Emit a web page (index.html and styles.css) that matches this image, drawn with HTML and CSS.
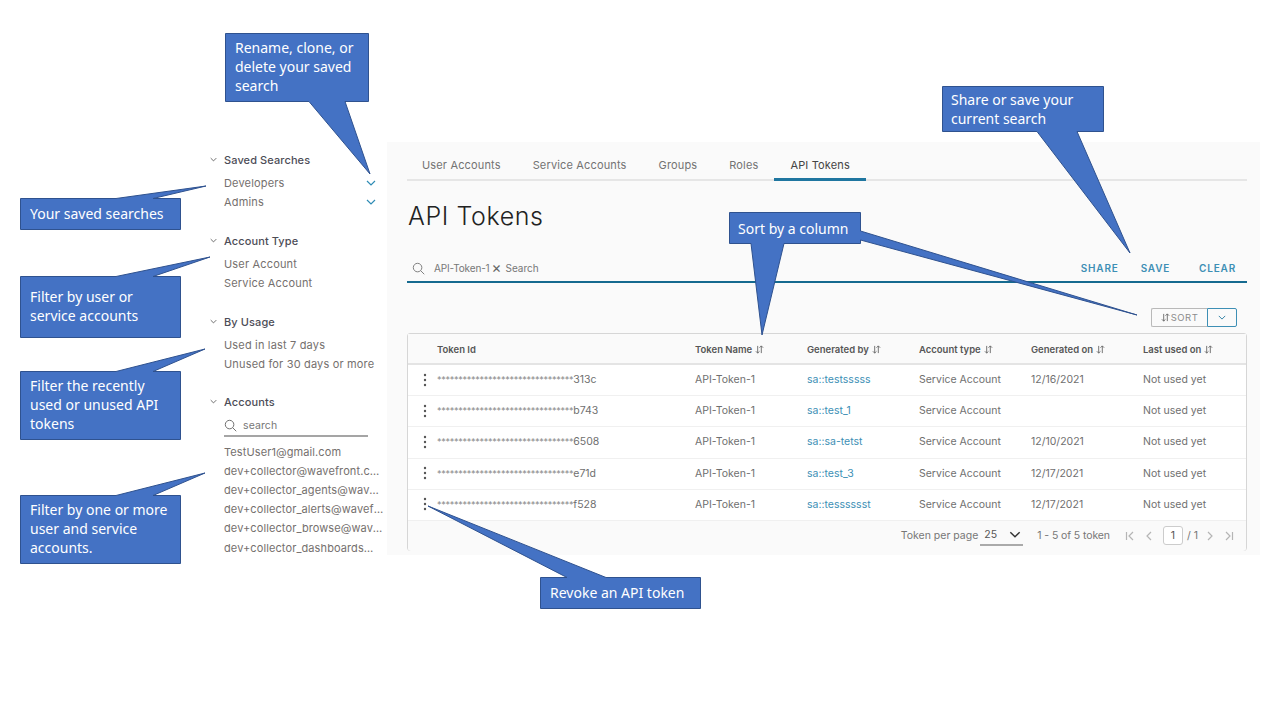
FILE: index.html
```html
<!DOCTYPE html>
<html>
<head>
    <meta charset="UTF-8">
    <title>API Tokens</title>
    <link rel="stylesheet" href="styles.css">
</head>
<body>
<svg class="defs">
    <symbol id="chev" viewBox="0 0 10 6"><path d="M1 1l4 4 4-4" fill="none" stroke="currentColor" stroke-width="1.2"/></symbol>
    <symbol id="sort" viewBox="0 0 10 10"><path d="M3 1v8M1 7l2 2 2-2M7 9V1M5 3l2-2 2 2" fill="none" stroke="currentColor" stroke-width="1"/></symbol>
    <symbol id="lens" viewBox="0 0 14 14"><circle cx="6" cy="6" r="4.6" fill="none" stroke="currentColor"/><path d="M9.4 9.4l3.8 3.8" stroke="currentColor"/></symbol>
    <symbol id="dots" viewBox="0 0 4 14"><circle cx="2" cy="2" r="1.2"/><circle cx="2" cy="7" r="1.2"/><circle cx="2" cy="12" r="1.2"/></symbol>
</svg>
<div class="stage">
    <div class="app">
        <aside class="side">
            <section class="group">
                <h4><svg class="caret"><use href="#chev"/></svg>Saved Searches</h4>
                <div class="item">Developers<svg class="more"><use href="#chev"/></svg></div>
                <div class="item">Admins<svg class="more"><use href="#chev"/></svg></div>
            </section>
            <section class="group">
                <h4><svg class="caret"><use href="#chev"/></svg>Account Type</h4>
                <div class="item">User Account</div>
                <div class="item">Service Account</div>
            </section>
            <section class="group">
                <h4><svg class="caret"><use href="#chev"/></svg>By Usage</h4>
                <div class="item">Used in last 7 days</div>
                <div class="item">Unused for 30 days or more</div>
            </section>
            <section class="group accounts">
                <h4><svg class="caret"><use href="#chev"/></svg>Accounts</h4>
                <div class="acct-search"><svg class="lens"><use href="#lens"/></svg>search</div>
                <div class="item">TestUser1@gmail.com</div>
                <div class="item"><span class="clip c1">dev+collector@wavefront.com</span></div>
                <div class="item"><span class="clip c1">dev+collector_agents@wavefront.com</span></div>
                <div class="item"><span class="clip c2">dev+collector_alerts@wavefront.com</span></div>
                <div class="item"><span class="clip c2">dev+collector_browse@wavefront.com</span></div>
                <div class="item"><span class="clip c3">dev+collector_dashboards@wavefront.com</span></div>
            </section>
        </aside>
        <main class="main">
            <nav class="tabs">
                <a>User Accounts</a>
                <a>Service Accounts</a>
                <a>Groups</a>
                <a>Roles</a>
                <a class="on">API Tokens</a>
            </nav>
            <h1>API Tokens</h1>
            <div class="searchbar">
                <svg class="lens"><use href="#lens"/></svg>
                <span class="chip">API-Token-1</span>
                <span class="x">&times;</span>
                <span class="ph">Search</span>
                <span class="acts"><a>SHARE</a><a>SAVE</a><a>CLEAR</a></span>
            </div>
            <div class="sortline">
                <div class="sortbtn">
                    <span class="sl"><svg class="si"><use href="#sort"/></svg>SORT</span>
                    <span class="sr"><svg><use href="#chev"/></svg></span>
                </div>
            </div>
            <div class="grid">
                <div class="row head">
                    <span></span>
                    <span class="first">Token Id</span>
                    <span>Token Name<svg class="si"><use href="#sort"/></svg></span>
                    <span>Generated by<svg class="si"><use href="#sort"/></svg></span>
                    <span>Account type<svg class="si"><use href="#sort"/></svg></span>
                    <span>Generated on<svg class="si"><use href="#sort"/></svg></span>
                    <span>Last used on<svg class="si"><use href="#sort"/></svg></span>
                </div>
                <div class="row">
                    <svg class="dots"><use href="#dots"/></svg>
                    <span><i>********************************</i>313c</span>
                    <span>API-Token-1</span><a>sa::testsssss</a><span>Service Account</span><span>12/16/2021</span><span>Not used yet</span>
                </div>
                <div class="row">
                    <svg class="dots"><use href="#dots"/></svg>
                    <span><i>********************************</i>b743</span>
                    <span>API-Token-1</span><a>sa::test_1</a><span>Service Account</span><span></span><span>Not used yet</span>
                </div>
                <div class="row">
                    <svg class="dots"><use href="#dots"/></svg>
                    <span><i>********************************</i>6508</span>
                    <span>API-Token-1</span><a>sa::sa-tetst</a><span>Service Account</span><span>12/10/2021</span><span>Not used yet</span>
                </div>
                <div class="row">
                    <svg class="dots"><use href="#dots"/></svg>
                    <span><i>********************************</i>e71d</span>
                    <span>API-Token-1</span><a>sa::test_3</a><span>Service Account</span><span>12/17/2021</span><span>Not used yet</span>
                </div>
                <div class="row">
                    <svg class="dots"><use href="#dots"/></svg>
                    <span><i>********************************</i>f528</span>
                    <span>API-Token-1</span><a>sa::tesssssst</a><span>Service Account</span><span>12/17/2021</span><span>Not used yet</span>
                </div>
                <div class="foot">
                    <span>Token per page</span>
                    <span class="perpage">25<svg><use href="#chev"/></svg></span>
                    <span class="count">1 - 5 of 5 token</span>
                    <svg class="pg" viewBox="0 0 10 10"><path d="M1.500 1v8M8 1L4 5l4 4"/></svg>
                    <svg class="pg" viewBox="0 0 10 10"><path d="M7 1L3 5l4 4"/></svg>
                    <span class="pagebox">1</span>
                    <span class="of">/ 1</span>
                    <svg class="pg" viewBox="0 0 10 10"><path d="M3 1l4 4-4 4"/></svg>
                    <svg class="pg" viewBox="0 0 10 10"><path d="M8.500 1v8M2 1l4 4-4 4"/></svg>
                </div>
            </div>
        </main>
    </div>

    <!-- callout shapes, drawn over the app -->
    <svg class="shapes" viewBox="0 0 1280 720">
        <path d="M225.500 33.500H368.500V101.500H345L370 174L309 101.500H225.500Z"/>
        <path d="M20.500 198.500H116L206 186L153 198.500H180.500V229.500H20.500Z"/>
        <path d="M20.500 276.500H116L210 257L153 276.500H180.500V337.500H20.500Z"/>
        <path d="M20.500 371.500H116L205 349L153 371.500H180.500V439.500H20.500Z"/>
        <path d="M20.500 495.500H116L205 473L153 495.500H180.500V563.500H20.500Z"/>
        <path d="M729.500 212.500H860.500V231L1137 315L860.500 240V243.500H784L762 335L751 243.500H729.500Z"/>
        <path d="M942.500 86.500H1103.500V131.500H1077L1130 253L1037 131.500H942.500Z"/>
        <path d="M540.500 577.500H567L428 506L606 577.500H700.500V608.500H540.500Z"/>
    </svg>
    <div class="note n1">Rename, clone, or delete your saved search</div>
    <div class="note n2">Your saved searches</div>
    <div class="note n3">Filter by user or service accounts</div>
    <div class="note n4">Filter the recently used or unused API tokens</div>
    <div class="note n5">Filter by one or more user and service accounts.</div>
    <div class="note n6">Sort by a column</div>
    <div class="note n7">Share or save your current search</div>
    <div class="note n8">Revoke an API token</div>
</div>
</body>
</html>
```

FILE: styles.css
```css
*{ margin:0; padding:0; box-sizing:border-box; }
body{ background:#fff; font-family:"Inter","Noto Sans",sans-serif; color:#666; overflow:hidden; }
.defs{ position:absolute; width:0; height:0; }
.stage{ position:relative; width:1280px; height:720px; overflow:hidden; }

.app{ display:flex; padding:142px 20px 0 208px; height:555px; }

/* left filters */
.side{ width:179px; padding-top:8px; height:413px; overflow:hidden; font-size:11px; letter-spacing:.17px; }
.group{ margin-bottom:20px; }
.group h4{ display:flex; align-items:center; height:19px; margin-bottom:4px; font-size:11px; font-weight:500; color:#4d4d57; letter-spacing:.1px; }
.caret{ width:7px; height:5px; margin:0 7px 0 2px; color:#555; }
.item{ display:flex; justify-content:space-between; align-items:center; height:19px; padding-left:16px; color:#75706e; white-space:nowrap; }
.more{ width:10px; height:6px; margin-right:11px; color:#2f8cb5; }
.accounts{ margin-top:-1px; letter-spacing:.1px; }
.accounts .item{ height:19.2px; }
.acct-search{ display:flex; align-items:center; height:22px; margin:0 0 5px 16px; padding-top:1px; width:144px; border-bottom:2px solid #a5a5a5; color:#777; font-size:10.5px; }
.acct-search .lens{ width:13px; height:13px; margin-right:6px; color:#666; }
.clip{ display:block; overflow:hidden; text-overflow:ellipsis; }
.c1{ width:156px; }
.c2{ width:160px; }
.c3{ width:152px; }

/* main panel */
.main{ flex:1; background:#fafafa; padding:0 13px 0 20px; }
.tabs{ display:flex; height:39px; padding-top:12px; border-bottom:2px solid #e6e6e6; font-size:11px; letter-spacing:.15px; }
.tabs a{ display:block; height:27px; padding:4px 16px 0; color:#737373; }
.tabs a:first-child{ margin-left:-1px; }
.tabs .on{ color:#444; border-bottom:3px solid #1f76a0; }
h1{ font-size:25px; font-weight:300; color:#222; line-height:30px; margin:20px 0 0 1px; letter-spacing:.6px; }
.searchbar{ display:flex; align-items:center; height:28px; margin-top:24px; padding:0 11px 0 5px; border-bottom:2px solid #156a8f; font-size:10px; color:#777; }
.searchbar .lens{ width:13px; height:13px; margin-right:9px; color:#777; }
.chip{ letter-spacing:-.15px; }
.x{ font-size:15px; line-height:12px; margin:0 4px 0 2px; color:#666; }
.acts{ margin-left:auto; display:flex; gap:22px; font-size:10px; font-weight:600; letter-spacing:.8px; color:#3d8fb5; }
.acts a:last-child{ margin-left:7px; }
.sortline{ display:flex; justify-content:flex-end; padding:25px 10px 6px 0; }
.sortbtn{ display:flex; height:19px; width:86px; font-size:9.5px; letter-spacing:.5px; color:#8c8c8c; }
.sl{ display:flex; align-items:center; justify-content:center; width:56px; border:1px solid #b9b9b9; border-right:0; border-radius:2px 0 0 2px; }
.sr{ display:flex; align-items:center; justify-content:center; width:30px; border:1px solid #3d8fb5; border-radius:0 2px 2px 0; color:#2f7fa5; }
.sr svg{ width:8px; height:5px; }
.sl .si{ margin:0 1px 0 0; }

.grid{ height:218px; border:1px solid #d6d6d6; border-radius:3px; background:#fff; font-size:10.5px; }
.row{ display:grid; grid-template-columns:29px 258px 112px 112px 112px 112px 1fr; align-items:center; height:31.2px; padding-bottom:1px; border-bottom:1px solid #f0f0f0; color:#6f6f6f; }
.row a{ color:#3d8fb5; }
.row i{ font-style:normal; font-size:9px; letter-spacing:-.25px; color:#888; }
.head{ height:31px; padding:1px 0 0; background:#fafafa; border-bottom:2px solid #e4e4e4; font-size:9.5px; font-weight:600; color:#565656; }
.si{ width:9px; height:9px; margin-left:3px; vertical-align:-1px; color:#666; }
.dots{ width:4px; height:14px; margin-left:15px; fill:#555; }
.foot{ display:flex; align-items:center; justify-content:flex-end; height:30px; padding-right:12px; background:#fafafa; border-radius:0 0 3px 3px; color:#777; font-size:10.5px; }
.perpage{ display:flex; align-items:center; justify-content:space-between; width:43px; height:20px; margin:0 14px 0 2px; padding:0 2px 0 4px; border-bottom:2px solid #aaa; color:#555; }
.perpage svg{ width:12px; height:7px; color:#333; }
.count{ margin-right:15px; letter-spacing:-.1px; }
.pg{ width:10px; height:10px; margin-right:9px; fill:none; stroke:#b5b5b5; stroke-width:1.2; }
.pagebox{ width:20px; height:19px; margin:0 4px 0 0; line-height:17px; text-align:center; border:1px solid #ccc; border-radius:3px; background:#fff; color:#555; }
.of{ margin-right:7px; }
.foot .pg:last-child{ margin-right:0; }

/* callouts */
.shapes{ position:absolute; left:0; top:0; width:1280px; height:720px; fill:#4472c4; stroke:#2f528f; stroke-width:1; }
.note{ position:absolute; display:flex; align-items:center; padding:0 10px 2px; font-family:"Noto Sans","Open Sans",sans-serif; font-size:14px; line-height:19px; color:#fff; }
.n1{ left:225px; top:33px; width:144px; height:69px; }
.n2{ left:20px; top:198px; width:161px; height:32px; }
.n3{ left:20px; top:276px; width:161px; height:62px; }
.n4{ left:20px; top:371px; width:161px; height:69px; }
.n5{ left:20px; top:495px; width:161px; height:69px; }
.n6{ left:729px; top:212px; width:132px; height:32px; padding:0 9px; }
.n7{ left:942px; top:86px; width:162px; height:46px; padding:0 9px; }
.n8{ left:540px; top:577px; width:161px; height:32px; }
```
